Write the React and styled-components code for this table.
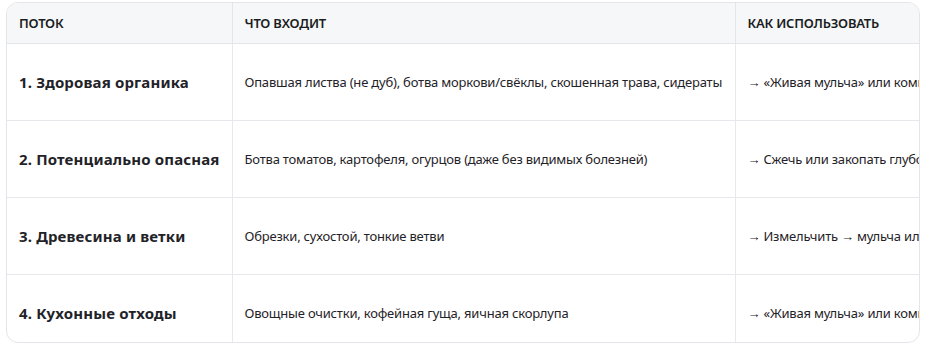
import React from "react";
import styled, { createGlobalStyle } from "styled-components";

const Global = createGlobalStyle`
  html, body { margin: 0; padding: 0; background: #ffffff; }
  body { font-family: "Noto Sans", "Open Sans", sans-serif; color: #1f2328; }
`;

const Frame = styled.div`
  margin: 2px 0 0 6px;
  width: 914px;
  height: 341px;
  box-sizing: border-box;
  border: 1px solid #e3e5ea;
  border-radius: 12px;
  overflow: hidden;
`;

const Table = styled.table`
  border-collapse: collapse;
  table-layout: fixed;
  width: 1100px;
`;

const HeadCell = styled.th`
  width: ${(p) => p.$w}px;
  height: 40px;
  padding: 0 12px;
  box-sizing: border-box;
  text-align: left;
  font-size: 13px;
  font-weight: 600;
  letter-spacing: -0.2px;
  color: #1a1d21;
  background: #f6f7f9;
  border-bottom: 1px solid #e3e5ea;
  border-left: ${(p) => (p.$first ? "none" : "1px solid #e3e5ea")};
  white-space: nowrap;
`;

const Cell = styled.td`
  height: 77px;
  padding: 0 12px;
  box-sizing: border-box;
  font-size: ${(p) => (p.$strong ? "15px" : "13px")};
  font-weight: ${(p) => (p.$strong ? 700 : 400)};
  letter-spacing: ${(p) => (p.$strong ? "0.15px" : "-0.2px")};
  color: #1f2328;
  border-bottom: 1px solid #e6e8ec;
  border-left: ${(p) => (p.$first ? "none" : "1px solid #e6e8ec")};
  white-space: nowrap;
  overflow: hidden;
  vertical-align: middle;
`;

const rows = [
  {
    name: "1. Здоровая органика",
    what: "Опавшая листва (не дуб), ботва моркови/свёклы, скошенная трава, сидераты",
    use: "→ «Живая мульча» или компост",
  },
  {
    name: "2. Потенциально опасная",
    what: "Ботва томатов, картофеля, огурцов (даже без видимых болезней)",
    use: "→ Сжечь или закопать глубоко (50+ см)",
  },
  {
    name: "3. Древесина и ветки",
    what: "Обрезки, сухостой, тонкие ветви",
    use: "→ Измельчить → мульча или основа для гряд",
  },
  {
    name: "4. Кухонные отходы",
    what: "Овощные очистки, кофейная гуща, яичная скорлупа",
    use: "→ «Живая мульча» или компост",
  },
];

export default function App() {
  return (
    <>
      <Global />
      <Frame>
        <Table>
          <thead>
            <tr>
              <HeadCell $w={225} $first>ПОТОК</HeadCell>
              <HeadCell $w={503}>ЧТО ВХОДИТ</HeadCell>
              <HeadCell $w={372}>КАК ИСПОЛЬЗОВАТЬ</HeadCell>
            </tr>
          </thead>
          <tbody>
            {rows.map((r) => (
              <tr key={r.name}>
                <Cell $strong $first>{r.name}</Cell>
                <Cell>{r.what}</Cell>
                <Cell>{r.use}</Cell>
              </tr>
            ))}
          </tbody>
        </Table>
      </Frame>
    </>
  );
}
